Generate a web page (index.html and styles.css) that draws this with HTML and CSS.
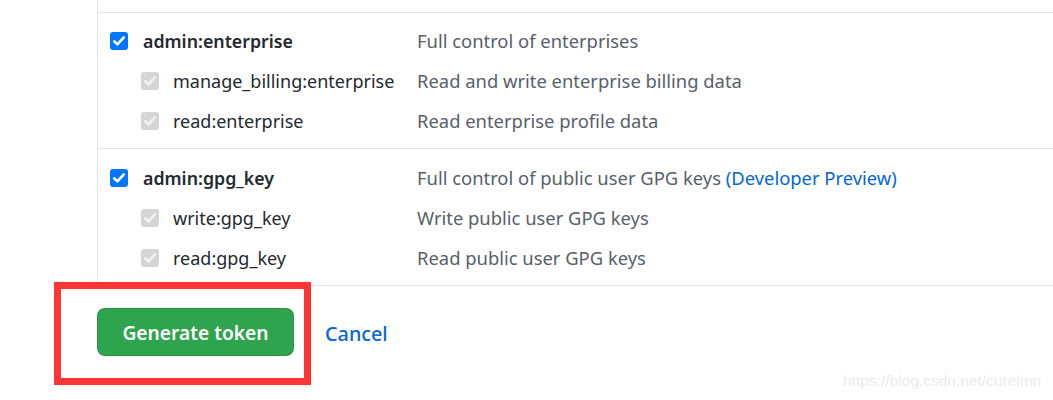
FILE: index.html
```html
<!DOCTYPE html>
<html lang="en">
<head>
<meta charset="utf-8">
<title>Scopes</title>
<link rel="stylesheet" href="styles.css">
</head>
<body>
<div class="page">
  <div class="scopes">
    <div class="prev"></div>
    <div class="section first">
      <div class="row">
        <div class="left">
          <span class="cb on"><svg viewBox="0 0 18 18"><path d="M4.2 9.3l3.2 3.1 6.4-7" fill="none" stroke="#fff" stroke-width="2.6" stroke-linecap="round" stroke-linejoin="round"/></svg></span>
          <span class="label main">admin:enterprise</span>
        </div>
        <div class="desc">Full control of enterprises</div>
      </div>
      <div class="row sub">
        <div class="left">
          <span class="cb dis"><svg viewBox="0 0 18 18"><path d="M4.2 9.3l3.2 3.1 6.4-7" fill="none" stroke="#f2f2f2" stroke-width="2.6" stroke-linecap="round" stroke-linejoin="round"/></svg></span>
          <span class="label">manage_billing:enterprise</span>
        </div>
        <div class="desc">Read and write enterprise billing data</div>
      </div>
      <div class="row sub">
        <div class="left">
          <span class="cb dis"><svg viewBox="0 0 18 18"><path d="M4.2 9.3l3.2 3.1 6.4-7" fill="none" stroke="#f2f2f2" stroke-width="2.6" stroke-linecap="round" stroke-linejoin="round"/></svg></span>
          <span class="label">read:enterprise</span>
        </div>
        <div class="desc">Read enterprise profile data</div>
      </div>
    </div>
    <div class="section second">
      <div class="row">
        <div class="left">
          <span class="cb on"><svg viewBox="0 0 18 18"><path d="M4.2 9.3l3.2 3.1 6.4-7" fill="none" stroke="#fff" stroke-width="2.6" stroke-linecap="round" stroke-linejoin="round"/></svg></span>
          <span class="label main">admin:gpg_key</span>
        </div>
        <div class="desc">Full control of public user GPG keys <a class="link" href="#">(Developer Preview)</a></div>
      </div>
      <div class="row sub">
        <div class="left">
          <span class="cb dis"><svg viewBox="0 0 18 18"><path d="M4.2 9.3l3.2 3.1 6.4-7" fill="none" stroke="#f2f2f2" stroke-width="2.6" stroke-linecap="round" stroke-linejoin="round"/></svg></span>
          <span class="label">write:gpg_key</span>
        </div>
        <div class="desc">Write public user GPG keys</div>
      </div>
      <div class="row sub">
        <div class="left">
          <span class="cb dis"><svg viewBox="0 0 18 18"><path d="M4.2 9.3l3.2 3.1 6.4-7" fill="none" stroke="#f2f2f2" stroke-width="2.6" stroke-linecap="round" stroke-linejoin="round"/></svg></span>
          <span class="label">read:gpg_key</span>
        </div>
        <div class="desc">Read public user GPG keys</div>
      </div>
    </div>
  </div>
  <div class="actions">
    <button class="btn-primary" type="button">Generate token</button>
    <a class="cancel" href="#">Cancel</a>
  </div>
  <div class="highlight"></div>
  <div class="watermark">https://blog.csdn.net/curelmn</div>
</div>
</body>
</html>
```

FILE: styles.css
```css
html, body {
  margin: 0;
  padding: 0;
  background: #fff;
  overflow: hidden;
}

.page {
  position: relative;
  width: 1053px;
  height: 400px;
  padding-left: 97px;
  box-sizing: border-box;
  font-family: "Noto Sans", "Open Sans", sans-serif;
  font-size: 18px;
  color: #24292e;
}

.scopes {
  width: 980px;
  border-left: 1px solid #e1e4e8;
  border-bottom: 1px solid #e1e4e8;
  border-bottom-left-radius: 6px;
}

.prev {
  height: 12px;
}

.section {
  border-top: 1px solid #e1e4e8;
  padding: 8px 0 7px 12px;
}

.section.second {
  padding-top: 9px;
}

.row {
  display: flex;
  align-items: center;
  height: 40px;
}

.left {
  display: flex;
  align-items: center;
  width: 307px;
  flex: none;
}

.row.sub .left {
  padding-left: 31px;
  box-sizing: border-box;
}

.cb {
  width: 18px;
  height: 18px;
  border-radius: 3px;
  flex: none;
  margin-right: 15px;
  display: flex;
}

.cb svg {
  width: 18px;
  height: 18px;
}

.cb.on {
  background: #0075ff;
}

.cb.dis {
  background: #d5d5d5;
  margin-right: 14px;
}

.label {
  white-space: nowrap;
}

.label.main {
  font-weight: 600;
  font-size: 17.8px;
}

.desc {
  color: #586069;
  white-space: nowrap;
  font-size: 18.4px;
  margin-bottom: 2px;
}

.link {
  color: #0366d6;
  text-decoration: none;
}

.actions {
  display: flex;
  align-items: center;
  margin-top: 22px;
}

.btn-primary {
  width: 197px;
  height: 48px;
  border: 1px solid rgba(27, 31, 35, 0.15);
  border-radius: 8px;
  background: #2ea44f;
  color: #fff;
  font-family: inherit;
  font-size: 19.2px;
  font-weight: 600;
  padding: 1px 0 0;
  box-sizing: border-box;
}

.cancel {
  margin-left: 31px;
  margin-top: 2px;
  color: #0366d6;
  text-decoration: none;
  font-size: 19.8px;
  font-weight: 500;
}

.highlight {
  position: absolute;
  left: 54px;
  top: 282px;
  width: 257px;
  height: 103px;
  border: 7px solid #fd3535;
  box-sizing: border-box;
}

.watermark {
  position: absolute;
  left: 843px;
  top: 372px;
  font-family: "Liberation Sans", Arial, sans-serif;
  font-size: 15.5px;
  color: #ebebeb;
  white-space: nowrap;
}
```
